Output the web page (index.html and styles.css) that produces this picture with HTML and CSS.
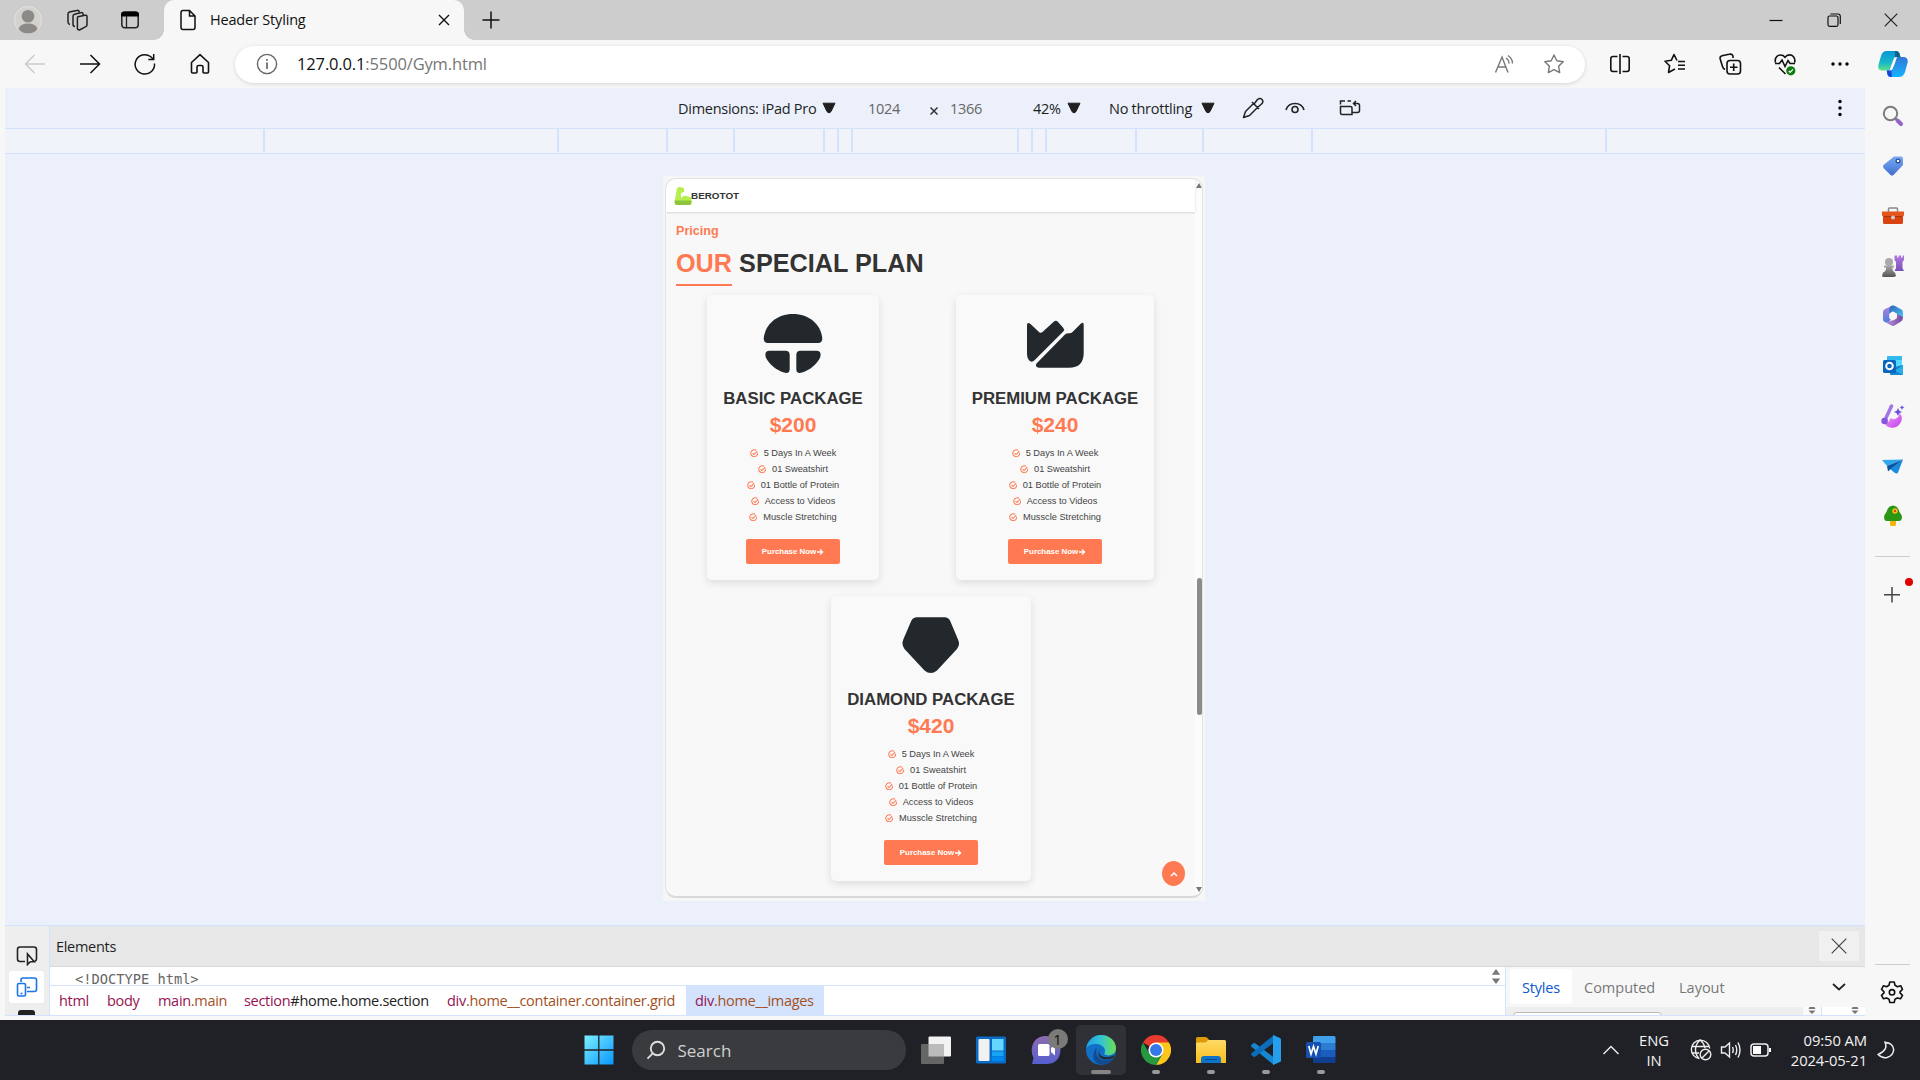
FILE: index.html
```html
<!DOCTYPE html>
<html lang="en">
<head>
<meta charset="utf-8">
<title>Header Styling</title>
<link rel="stylesheet" href="styles.css">
</head>
<body>
<svg class="defs" width="0" height="0" aria-hidden="true">
  <defs>
    <symbol id="check" viewBox="0 0 10 10"><path d="M9 4.200A4.100 4.100 0 1 1 7.200 1.500M3 4.900l1.700 1.600L8.400 2.500" fill="none" stroke="#ff7a52" stroke-width="1.200"/></symbol>
    <symbol id="arrow" viewBox="0 0 8 8"><path d="M1 4h5.400M4 1.400L6.600 4 4 6.600" fill="none" stroke="#fff" stroke-width="1.300"/></symbol>
    <symbol id="down" viewBox="0 0 14 12"><path d="M1 1.200h12L9 9.600Q7 12.200 5 9.600z" fill="#1f1f1f" stroke="#1f1f1f" stroke-linejoin="round"/></symbol>
    <linearGradient id="gwin" x1="0" y1="0" x2="1" y2="1"><stop offset="0" stop-color="#7bf0ff"/><stop offset="1" stop-color="#0a96ff"/></linearGradient>
    <linearGradient id="gpur" x1="0" y1="0" x2="0" y2="1"><stop offset="0" stop-color="#b07adf"/><stop offset="1" stop-color="#7a4fb8"/></linearGradient>
    <linearGradient id="gblue" x1="0" y1="0" x2="0" y2="1"><stop offset="0" stop-color="#78a9f3"/><stop offset="1" stop-color="#4270cf"/></linearGradient>
    <linearGradient id="ggray" x1="0" y1="0" x2="0" y2="1"><stop offset="0" stop-color="#aaa"/><stop offset="1" stop-color="#555"/></linearGradient>
    <linearGradient id="gcop" x1="0" y1="0" x2="0" y2="1"><stop offset="0" stop-color="#0796d6"/><stop offset=".6" stop-color="#18b8c8"/><stop offset="1" stop-color="#5ee08a"/></linearGradient>
    <linearGradient id="gcop2" x1="0" y1="0" x2="0" y2="1"><stop offset="0" stop-color="#3377d6"/><stop offset="1" stop-color="#14b4ff"/></linearGradient>
    <linearGradient id="gedge" x1="0" y1="0" x2="1" y2="0"><stop offset="0" stop-color="#1f9fe6"/><stop offset=".5" stop-color="#35c4d4"/><stop offset="1" stop-color="#6be04b"/></linearGradient>
    <linearGradient id="gyel" x1="0" y1="0" x2="0" y2="1"><stop offset="0" stop-color="#ffdb6a"/><stop offset="1" stop-color="#f9bc1b"/></linearGradient>
    <linearGradient id="gchat" x1="0" y1="0" x2="0" y2="1"><stop offset="0" stop-color="#8c6cae"/><stop offset="1" stop-color="#5560cf"/></linearGradient>
    <linearGradient id="gpink" x1="0" y1="0" x2="1" y2="1"><stop offset="0" stop-color="#e9a2f5"/><stop offset="1" stop-color="#c63bee"/></linearGradient>
    <linearGradient id="gm1" x1="0" y1="0" x2="0" y2="1"><stop offset="0" stop-color="#b985d8"/><stop offset="1" stop-color="#3a7be0"/></linearGradient>
    <linearGradient id="gm2" x1="0" y1="0" x2="1" y2="1"><stop offset="0" stop-color="#2c62ba"/><stop offset="1" stop-color="#4cc8f5"/></linearGradient>
    <linearGradient id="gm3" x1="0" y1="0" x2="1" y2="0"><stop offset="0" stop-color="#c190e0"/><stop offset="1" stop-color="#71479f"/></linearGradient>
  </defs>
</svg>

<header class="titlebar">
  <svg class="avatar" viewBox="0 0 28 28"><circle cx="14" cy="14" r="13.500" fill="#d3d2ce" stroke="#e4e2de"/><circle cx="14" cy="10.300" r="6.300" fill="#8c8986"/><path d="M4.500 23Q6 17.500 14 17.500T23.500 23Q20 27.500 14 27.500T4.500 23z" fill="#8c8986"/></svg>
  <svg class="workspaces" viewBox="0 0 24 24" fill="none" stroke="#222" stroke-width="1.500"><path d="M12 8.700l7-1.500q2-.4 2 1.600v8q0 1.600-1.600 2.100l-5.400 2.800q-2 .6-2.600-1V10.500q0-1.500.6-1.800z"/><path d="M17.500 7l-.8-1.900q-.7-.8-2-.3L8.500 6.200Q7 6.600 7 8v8.500q0 1.800 2 2"/><path d="M13.500 4.500l-.8-1.800q-.7-.8-2-.2L3.500 4Q2 4.600 2 6v8q0 2 2 2.500"/></svg>
  <svg class="tabmenu" viewBox="0 0 20 20"><rect x="1.800" y="2.200" width="16.400" height="15.600" rx="3" fill="none" stroke="#222" stroke-width="1.500"/><path d="M1 6.500V4.500Q1 1.500 4 1.500H16Q19 1.500 19 4.500V6.500z"/><path d="M6.500 6V18" stroke="#222" stroke-width="1.300"/></svg>
  <div class="tab">
    <svg class="doc" viewBox="0 0 18 22" fill="none" stroke="#111" stroke-width="1.500"><path d="M4 1.500H10.500L16 7V18.500Q16 20.500 14 20.500H4Q2 20.500 2 18.500V3.500Q2 1.500 4 1.500zM10.500 1.500V7H16"/></svg>
    <span class="tab-title">Header Styling</span>
    <svg class="tab-close" viewBox="0 0 12 12"><path d="M1 1l10 10M11 1L1 11" stroke="#111" stroke-width="1.400"/></svg>
  </div>
  <svg class="newtab" viewBox="0 0 18 18"><path d="M9 .5V17.500M.5 9H17.500" stroke="#111" stroke-width="1.500"/></svg>
  <div class="winctl">
    <svg viewBox="0 0 14 14"><path d="M.5 7.500h13" stroke="#111" stroke-width="1.200"/></svg>
    <svg viewBox="0 0 14 14" fill="none" stroke="#111" stroke-width="1.200"><rect x="1" y="3" width="10" height="10.300" rx="1.500"/><path d="M3.500 1H11q2.300 0 2.300 2.300V11"/></svg>
    <svg viewBox="0 0 14 14"><path d="M.7.700l12.600 12.600M13.300.700L.7 13.300" stroke="#222" stroke-width="1.200"/></svg>
  </div>
</header>

<nav class="toolbar">
  <div class="cell"><svg viewBox="0 0 24 24" fill="none" stroke="#ccc" stroke-width="1.500"><path d="M22 12H2.500M11.500 3L2.500 12l9 9"/></svg></div>
  <div class="cell"><svg viewBox="0 0 24 24" fill="none" stroke="#111" stroke-width="1.500"><path d="M2 12H21.500M12.500 3l9 9-9 9"/></svg></div>
  <div class="cell"><svg viewBox="0 0 24 24" fill="none" stroke="#111" stroke-width="1.500"><path d="M21.500 11.500A9.700 9.700 0 1 1 17.500 4.500L20.500 7.200M20.700 2V7.400H15.300"/></svg></div>
  <div class="cell"><svg viewBox="0 0 24 24" fill="none" stroke="#111" stroke-width="1.600" stroke-linejoin="round"><path d="M3.500 10.500L12 2.700l8.500 7.800V20q0 1-1 1H16q-1 0-1-1V15q0-1.500-1.500-1.500h-3Q9 13.500 9 15V20q0 1-1 1H4.500q-1 0-1-1z"/></svg></div>
  <div class="address">
    <svg class="info" viewBox="0 0 22 22" fill="none" stroke="#666" stroke-width="1.400"><circle cx="11" cy="11" r="9.600"/><path d="M11 9.500V16M11 6V7.700" stroke-width="1.700"/></svg>
    <span class="url"><b>127.0.0.1</b>:5500/Gym.html</span>
    <svg class="read" viewBox="0 0 22 22" fill="none" stroke="#777" stroke-width="1.400"><path d="M1.500 19.500L8 4l6 15.500M3.800 14h8.200M12 5q3 2 3 5.500M14 2.500q4.500 3 4.500 8"/></svg>
    <svg class="star" viewBox="0 0 22 22" fill="none" stroke="#777" stroke-width="1.400" stroke-linejoin="round"><path d="M11 2l2.800 5.800 6.400.9-4.600 4.500 1.100 6.400L11 16.600l-5.700 3 1.100-6.400L1.800 8.700l6.400-.9z"/></svg>
  </div>
  <div class="actions">
    <div class="cell"><svg viewBox="0 0 24 24" fill="none" stroke="#111" stroke-width="1.600"><path d="M12 2V22M9.500 4.500H5Q2.800 4.500 2.800 6.700V17.300Q2.800 19.500 5 19.500H9.500M14.500 4.500H19Q21.200 4.500 21.200 6.700V17.300Q21.200 19.500 19 19.500H14.500"/></svg></div>
    <div class="cell"><svg viewBox="0 0 24 24" fill="none" stroke="#111" stroke-width="1.600" stroke-linejoin="round"><path d="M14 8.500L11 2.500 8.300 8.300 2 9.200l4.600 4.500L5.500 20.500l5.500-3 1-.5M15 9.500H22M15 13.200H22M15 17H22"/></svg></div>
    <div class="cell"><svg viewBox="0 0 24 24" fill="none" stroke="#111" stroke-width="1.600"><rect x="9" y="8.500" width="13.500" height="13.500" rx="3"/><path d="M15.700 11.500V19M12 15.200H19.500M7 17.500Q5 16.500 4.500 14.500L2.200 7Q1.500 4.500 4 3.700L11 2.300Q14 1.500 15 4V6"/></svg></div>
    <div class="cell"><svg viewBox="0 0 24 24" fill="none" stroke="#111" stroke-width="1.600"><path d="M2.500 10.500Q1.500 6.500 4 4.300T10 3.500L12 5.300 14 3.500Q18 1.800 20.300 4.500T21.600 10.500M2 11.500H6.500L9 8 12 14.500 15 8.500 17 11.500H22M6 15.500L12.500 22"/><circle cx="17.800" cy="18.800" r="4.600" fill="#107c10" stroke="none"/><path d="M15.800 19l1.400 1.400 2.700-3" stroke="#fff" stroke-width="1.200"/></svg></div>
    <div class="cell"><svg viewBox="0 0 24 24"><circle cx="5" cy="12" r="1.700"/><circle cx="12" cy="12" r="1.700"/><circle cx="19" cy="12" r="1.700"/></svg></div>
  </div>
  <svg class="copilot" viewBox="0 0 30 28"><path d="M9 1H18.500Q20.700 1 21.500 3.500L22.500 7H18.500Q16 7 15 10L12.800 17Q11.800 20.500 8 20.500H4Q-.5 20.500.4 15L3 6Q4.300 1 9 1z" fill="url(#gcop)"/><path d="M17 1H18.500Q20.700 1 21.500 3.500L22.500 7H17z" fill="#12608c"/><path d="M21 27H12.500Q10.200 27 9.400 24.500L8.500 20.500Q11.800 20.500 12.800 17L15 10Q16 7 19 7H26Q30.700 7.500 29.500 13L27 22Q25.500 27 21 27z" fill="url(#gcop2)"/><path d="M9 20.500Q11.800 20.500 12.800 17L14 26.800Q10.200 27.500 9.400 24.500z" fill="#1b45d4"/><path d="M16 8.200Q17 7 19 7L17 13 14.500 19Q13 21 10 20.500 11.800 20.500 12.800 17z" fill="#fff"/></svg>
</nav>

<div class="body">
  <main class="content">
    <div class="devicebar">
      <span class="dim">Dimensions: iPad Pro</span>
      <svg class="caret"><use href="#down"/></svg>
      <span class="num">1024</span>
      <svg class="times" viewBox="0 0 10 10"><path d="M1.500 1.500l7 7M8.500 1.500l-7 7" stroke="#333" stroke-width="1.500"/></svg>
      <span class="num">1366</span>
      <span>42%</span>
      <svg class="caret"><use href="#down"/></svg>
      <span class="thr">No throttling</span>
      <svg class="caret"><use href="#down"/></svg>
      <svg class="tool" viewBox="0 0 22 22" fill="none" stroke="#222" stroke-width="1.500" stroke-linejoin="round"><path d="M11.500 6.500L3.500 14.500 1.500 20.500 7.500 18.500 15.500 10.500M10 5l7 7M12 7L15.500 2.500Q18 .5 20 2.500T19.500 7L15.500 10.500"/></svg>
      <svg class="tool" viewBox="0 0 22 22" fill="none" stroke="#222" stroke-width="1.600"><path d="M2 13Q4 6.500 11 6.500T20 13"/><circle cx="11" cy="12.500" r="3"/></svg>
      <svg class="tool" viewBox="0 0 22 22" fill="none" stroke="#222" stroke-width="1.500"><path d="M1.500 7.500V4H6M1.500 9.500H11.500Q13 9.500 13 11V17.500H3Q1.500 17.500 1.500 16zM8.500 4H12M13 15.500H18.500Q20.500 15.500 20.500 13.500V8.500Q20.500 6.500 18.500 6.500H15M17 4l-2.500 2.500L17 9"/></svg>
      <svg class="kebab" viewBox="0 0 4 18"><circle cx="2" cy="2.500" r="1.700"/><circle cx="2" cy="9" r="1.700"/><circle cx="2" cy="15.500" r="1.700"/></svg>
    </div>
    <div class="ruler"><i></i><i></i><i></i><i></i><i></i><i></i><i></i><i></i><i></i><i></i><i></i><i></i><i></i><i></i></div>
    <div class="stage">
      <div class="frame">
        <div class="screen">
          <div class="page">
            <div class="site-header">
              <svg viewBox="0 0 18 18"><path d="M3 1.500Q4-.3 7 .2L10 1.200 10.200 5 6.800 6 7 11Q10 7.500 14 9.500L17.500 10.500V16Q17 18 15 18H3Q.5 18 .7 14z" fill="#b5ee4d"/><path d="M.7 13.500H17.500V16Q17 18 15 18H3Q.3 18 .7 13.500z" fill="#8cc63c"/></svg>
              <span>BEROTOT</span>
            </div>
            <section class="pricing">
              <h4>Pricing</h4>
              <h1><span>OUR</span> SPECIAL PLAN</h1>
              <div class="cards">
                <article class="card basic">
                  <svg class="pic" viewBox="0 0 60 60" fill="#23282c"><path d="M5 30Q.5 30 .7 25C2.500 11 14 1 30 1S57.500 11 59.300 25Q59.500 30 55 30z"/><path d="M6.500 37.700H22.500Q26.700 37.700 26.700 42V56Q26.700 61 21 59.600C13 57 6 51 2.900 44.500Q1 37.700 6.500 37.700z"/><path d="M53.500 37.700H37.500Q33.300 37.700 33.300 42V56Q33.300 61 39 59.600C47 57 54 51 57.100 44.500Q59 37.700 53.500 37.700z"/></svg>
                  <h3>BASIC PACKAGE</h3><div class="price">$200</div>
                  <ul><li><svg><use href="#check"/></svg>5 Days In A Week</li><li><svg><use href="#check"/></svg>01 Sweatshirt</li><li><svg><use href="#check"/></svg>01 Bottle of Protein</li><li><svg><use href="#check"/></svg>Access to Videos</li><li><svg><use href="#check"/></svg>Muscle Stretching</li></ul>
                  <a class="buy">Purchase Now<svg><use href="#arrow"/></svg></a>
                </article>
                <article class="card premium">
                  <svg class="pic" viewBox="0 0 60 60" fill="#23282c"><path d="M2 12Q2.200 9 5.200 10.700L14.300 19.300Q16 20.500 17.500 19L28.700 8.700Q31 7 32.800 8.700L38 14.500Q40 16.500 38.300 18.500L9.500 47.300Q7.500 49.300 5.200 48.300 2 46.500 2 40z"/><path d="M56 10.500Q58.700 8.500 58.700 12V40Q58.700 54.700 44 54.700H14Q9.500 54 11.500 50.500L40 21.500Q41.500 20 44.500 20.200 46.300 20.200 47.500 19z"/></svg>
                  <h3>PREMIUM PACKAGE</h3><div class="price">$240</div>
                  <ul><li><svg><use href="#check"/></svg>5 Days In A Week</li><li><svg><use href="#check"/></svg>01 Sweatshirt</li><li><svg><use href="#check"/></svg>01 Bottle of Protein</li><li><svg><use href="#check"/></svg>Access to Videos</li><li><svg><use href="#check"/></svg>Musscle Stretching</li></ul>
                  <a class="buy">Purchase Now<svg><use href="#arrow"/></svg></a>
                </article>
                <article class="card diamond">
                  <svg class="pic" viewBox="0 0 60 60" fill="#23282c"><path d="M16 3.300H43.500Q47.500 3.300 49.200 7L57 25.500Q59.500 31 56 35L36 56.500Q29.700 61.500 23.500 56.500L3.500 35Q.2 31 2.300 25.500L10.200 7Q12 3.300 16 3.300z"/></svg>
                  <h3>DIAMOND PACKAGE</h3><div class="price">$420</div>
                  <ul><li><svg><use href="#check"/></svg>5 Days In A Week</li><li><svg><use href="#check"/></svg>01 Sweatshirt</li><li><svg><use href="#check"/></svg>01 Bottle of Protein</li><li><svg><use href="#check"/></svg>Access to Videos</li><li><svg><use href="#check"/></svg>Musscle Stretching</li></ul>
                  <a class="buy">Purchase Now<svg><use href="#arrow"/></svg></a>
                </article>
              </div>
            </section>
            <a class="to-top"><svg viewBox="0 0 8 6"><path d="M1 5l3-3 3 3" fill="none" stroke="#fff" stroke-width="1.500"/></svg></a>
          </div>
          <div class="scroll">
            <svg viewBox="0 0 6 5"><path d="M3 0l3 5H0z" fill="#777"/></svg>
            <div class="thumb"></div>
            <svg viewBox="0 0 6 5"><path d="M3 5L0 0h6z" fill="#777"/></svg>
          </div>
        </div>
      </div>
    </div>
    <div class="devtools">
      <div class="strip">
        <svg viewBox="0 0 22 22" fill="none" stroke="#222" stroke-width="1.600"><path d="M9 17.500H4Q1.500 17.500 1.500 15V5.500Q1.500 3 4 3H18Q20.500 3 20.500 5.500V15Q20.500 17 18.500 17.500"/><path d="M11.500 10V20.500L14.300 17.700H18.200z" fill="#fff"/></svg>
        <div class="on"><svg viewBox="0 0 22 22" fill="none" stroke="#1a73e8" stroke-width="1.600"><path d="M5 6V4Q5 2 7 2H18.500Q20.500 2 20.500 4V13.500Q20.500 15.500 18.500 15.500H11M11 11.500H14"/><rect x="1.500" y="7.500" width="8" height="12.500" rx="1.500"/><path d="M4.500 17.500H6.500"/></svg></div>
        <div class="cut"></div>
      </div>
      <div class="panel">
        <div class="head"><span>Elements</span><div class="x"><svg viewBox="0 0 16 16"><path d="M.7.700l14.600 14.600M15.300.700L.7 15.300" stroke="#444" stroke-width="1.200"/></svg></div></div>
        <div class="split">
          <div class="dom">
            <div class="tree"><code>&lt;!DOCTYPE html&gt;</code><svg viewBox="0 0 10 16"><path d="M5 0l4.500 6h-9zM5 16L.5 10h9z" fill="#777"/></svg></div>
            <div class="crumbs"><span class="c1"><b>html</b></span><span class="c2"><b>body</b></span><span class="c3"><b>main</b>.main</span><span class="c4"><b>section</b><em>#home.home.section</em></span><span class="c5"><b>div</b>.home__container.container.grid</span><span class="c6"><b>div</b>.home__images</span></div>
          </div>
          <div class="styles">
            <div class="tabs"><span class="sel">Styles</span><span class="t2">Computed</span><span class="t3">Layout</span><svg viewBox="0 0 14 8"><path d="M1 1l6 5.500L13 1" fill="none" stroke="#222" stroke-width="1.700"/></svg></div>
            <div class="sub"><div class="filter"></div><div class="sp"><svg viewBox="0 0 8 7"><path d="M1.500 0h5l1 2h-7zM.5 3.500h7L4 7z" fill="#777"/></svg></div><div class="sp last"><svg viewBox="0 0 8 7"><path d="M1.500 0h5l1 2h-7zM.5 3.500h7L4 7z" fill="#777"/></svg></div></div>
          </div>
        </div>
      </div>
    </div>
  </main>

  <aside class="sidebar">
    <div><svg viewBox="0 0 24 24"><circle cx="9.500" cy="9.500" r="6.700" fill="none" stroke="#7c7c7c" stroke-width="2"/><path d="M14 14l3 3" stroke="#777" stroke-width="2"/><path d="M16.500 16.500l3.500 3.500" stroke="#9264c8" stroke-width="4" stroke-linecap="round"/></svg></div>
    <div><svg viewBox="0 0 24 24"><path d="M13 2.500H20Q22 2.500 22 4.500V11L12.500 21Q11 22 9.500 21L2.500 14Q1.500 12.500 2.500 11z" fill="url(#gblue)"/><circle cx="17" cy="7" r="1.900" fill="#fff" stroke="#234b91" stroke-width="1.200"/></svg></div>
    <div><svg viewBox="0 0 24 24"><path d="M7.500 8V5Q7.500 4 8.500 4H15.500Q16.500 4 16.500 5V8" fill="none" stroke="#888" stroke-width="1.500"/><rect x="2" y="9" width="20" height="11" rx="1.500" fill="#d8430f"/><path d="M1 7.500H23V11Q23 12.500 21 12.500H3Q1 12.500 1 11z" fill="#e4561d"/><path d="M3 12.500H21" stroke="#a93308"/><circle cx="12" cy="13.500" r="2" fill="#ccc"/></svg></div>
    <div><svg viewBox="0 0 24 24"><path d="M13.500 1.500H16V3.500H17.500V1.500H20V3.500H21.500V1.500H23V6L21.500 8V14L23 17H13.500L15 14V8L13.500 6z" fill="url(#gpur)"/><circle cx="8" cy="8" r="4" fill="#aaa"/><path d="M3 11.500H13V13.500H11.500Q11 17 14 18.500L15 22Q14 23 12 23H3Q1 23 1 22L2 18.500Q5.500 17 5 13.500H3z" fill="url(#ggray)"/></svg></div>
    <div><svg viewBox="0 0 24 24"><path d="M9 2.700L13 1Q9 5 9.500 8.500V16L8 18 12 22 3 17.500Q2 17 2 15V8Q2 6 4 5z" fill="url(#gm1)"/><path d="M9 2.700Q12 .7 14 2L20.500 5.500Q22 6.500 22 8.500V14L16 10 12 7.500 8.500 9.500Q8 5 9 2.700z" fill="url(#gm2)"/><path d="M22 13Q22 16 20 17.500L13.500 21.500Q12 22.500 10 21L4.500 18Q9 18 12 16L16 13.500V10z" fill="url(#gm3)"/><path d="M12 7.500l3.800 2.200v4.500L12 16.500l-3.800-2.300V9.700z" fill="#f7f7f7"/></svg></div>
    <div><svg viewBox="0 0 24 24"><rect x="6" y="2" width="15" height="16" rx="1" fill="#32b8ed"/><path d="M13 6H21V14H13z" fill="#52dbff"/><path d="M9 14L22 11V20Q22 21 21 21H10Q9 21 9 20z" fill="#1487d1"/><path d="M22 11.500V21L14 16.500z" fill="#29aee8"/><rect x="2" y="6" width="13" height="13" rx="1.500" fill="#0667bd"/><circle cx="8.500" cy="12" r="3.300" fill="none" stroke="#fff" stroke-width="2"/></svg></div>
    <div><svg viewBox="0 0 24 24"><path d="M3.500 19Q8 19.500 9.500 14Q12 16 15 14.500Q18.500 12.500 18.500 9Q23 14 19 19.500T9 23.500Q5 22.500 3.500 19z" fill="url(#gpink)"/><path d="M10.500 2L4.500 15" stroke="#a276e8" stroke-width="3.500" stroke-linecap="round"/><circle cx="3.600" cy="17" r="3.300" fill="#8656df"/><path d="M17 4l1.300 2.700L21 8l-2.700 1.300L17 12l-1.300-2.700L13 8l2.700-1.300z" fill="#6952dc"/><path d="M21 1l.8 1.700 1.700.8-1.700.8L21 6l-.8-1.700-1.700-.8 1.700-.8z" fill="#7756df"/></svg></div>
    <div><svg viewBox="0 0 24 24"><path d="M1 6L22 5.500 6 12z" fill="#30a8ec"/><path d="M22 5.500L17 18.500Q16 20 14 19L9 15z" fill="#168dde"/><path d="M22 5.500L6 12 7 17.500 9.500 15z" fill="#0d539b"/></svg></div>
    <div><svg viewBox="0 0 24 24"><path d="M9 16H15V20.500Q15 22 13.500 22H10.500Q9 22 9 20.500z" fill="#f4b40f"/><path d="M12 1.500Q17 2 18.500 8 22 12 20.500 15.500 19.500 17.300 17 17H7Q4 17.300 3.500 15.500 2 12 5.500 8 7 2 12 1.500z" fill="#2b9615"/><circle cx="14" cy="7" r="2.700" fill="#f7c318"/><circle cx="14" cy="7" r="1.200" fill="#d6450b"/></svg></div>
    <hr>
    <div class="add"><svg viewBox="0 0 24 24"><path d="M12 4V19.500M4 11.700H20" stroke="#444" stroke-width="1.500"/></svg><i class="dot"></i></div>
    <hr class="low">
    <div class="gear"><svg viewBox="0 0 24 24" fill="none" stroke="#111" stroke-width="1.600" stroke-linejoin="round"><path d="M9.800 2H14.200L15 5.300 17.500 6.700 20.700 5.700 22.500 9.300 20 11.900V12.900L22.500 15.300 20.500 18.800 17.500 17.900 15 19.300 14.200 22.500H9.800L9 19.300 6.500 17.900 3.500 18.800 1.500 15.300 4 12.900V11.900L1.500 9.300 3.500 5.700 6.500 6.700 9 5.300z"/><circle cx="12" cy="12.300" r="2.700"/></svg></div>
  </aside>
</div>

<footer class="taskbar">
  <div class="app"><svg viewBox="0 0 30 30" fill="url(#gwin)"><path d="M.5.500H29.500V29.500H.5z"/><path d="M14.800 0V30M0 15H30" stroke="#1f2126" stroke-width="1.300"/></svg></div>
  <div class="search"><svg viewBox="0 0 20 20" fill="none" stroke="#ddd" stroke-width="1.900"><circle cx="11.500" cy="8.500" r="6.700"/><path d="M6.700 13.300L1.500 18.700"/></svg><span>Search</span></div>
  <div class="app"><svg viewBox="0 0 30 30"><rect x="7.500" y="1.500" width="22.500" height="20" rx="1" fill="#f2f2f2"/><rect x="0" y="9" width="23" height="20" rx="1" fill="#666"/><rect x="7.500" y="9" width="15.500" height="12.500" fill="#bbb"/></svg></div>
  <div class="app"><svg viewBox="0 0 30 30"><rect y="1.500" width="30" height="27" rx="1.500" fill="#0a6cc4"/><rect x="2.500" y="4" width="11" height="22" rx="1" fill="#f1f1f1"/><rect x="16" y="4" width="11.500" height="11.500" fill="#63d7ff"/><rect x="16" y="16.500" width="11.500" height="4.500" fill="#16a3f2"/><rect x="16" y="21.500" width="11.500" height="4.500" fill="#008af0"/></svg></div>
  <div class="app chat"><svg viewBox="0 0 30 30"><path d="M15 1Q29.500 2 29.500 15 28.500 29 15 29H1L2.500 23Q.5 19 .7 15 1.500 1.500 15 1z" fill="url(#gchat)"/><rect x="7" y="9" width="11.500" height="12" rx="1.500" fill="#fff"/><path d="M20 13l4-3.500V20.500L20 17z" fill="#fff"/></svg><span class="badge">1</span></div>
  <div class="app active"><svg viewBox="0 0 30 30"><circle cx="15" cy="15" r="15" fill="#1170c6"/><path d="M.2 13.500C1 6 7.500 0 15 0c9 0 15 6.500 15 13 0 5-3.500 7.300-7.500 7.300-3 0-4.700-1.300-4-2.300C20.500 14.500 17 9.500 11.500 9 6 8.600 1.500 10.500.2 13.500z" fill="url(#gedge)"/><path d="M11 12.500Q8.500 19 13.500 23.500 19 27.500 28 22.500 23 30.500 14.500 29.800 8 28 7.300 21.500 7.200 15.500 11 12.500z" fill="#124a94"/><path d="M14 13Q11 19 16.500 21.500 21 23.700 28.700 20L27.500 22.500Q20 26 15.500 23.500 10 20 14 13z" fill="#26282d"/></svg><i class="bar"></i></div>
  <div class="app"><svg viewBox="0 0 30 30"><path d="M15 15L2 7.500A15 15 0 0 1 28 7.500z" fill="#e63b2e"/><path d="M15 15V7.500H28A15 15 0 0 1 15 30L21.500 18.700z" fill="#fcc61c"/><path d="M15 15L21.500 18.800 15 30A15 15 0 0 1 2 7.500L8.500 18.800z" fill="#26983f"/><circle cx="15" cy="15" r="7.600" fill="#fff"/><circle cx="15" cy="15" r="6" fill="#3578e8"/></svg><i class="pill"></i></div>
  <div class="app"><svg viewBox="0 0 30 30"><path d="M0 3.500Q0 2 1.500 2H9.500Q11 2 12 3.500L14 6V12H0z" fill="#dc9a05"/><path d="M12 5H28.500Q30 5 30 6.500V28H0V8.500Q0 7.500 1.500 7.500H9Q10.500 7.500 12 5z" fill="url(#gyel)"/><path d="M5 28V24Q5 21 8 21H22Q25 21 25 24V28z" fill="#0e73c9"/><path d="M9 24.500H21" stroke="#064a91"/></svg><i class="pill"></i></div>
  <div class="app"><svg viewBox="0 0 30 30"><path d="M0 10.500L2 8.500Q3.300 7.600 4.500 8.500L23 22.500V30L.5 11.800Q-.2 11 0 10.500z" fill="#1687d0"/><path d="M0 19.500L2 21.500Q3.300 22.400 4.500 21.500L23 7.500V0L.5 18.200Q-.2 19 0 19.500z" fill="#0c6dbb"/><path d="M22 0L29 3Q30 3.500 30 4.500V25.500Q30 26.500 29 27L22 30z" fill="#259fec"/></svg><i class="pill"></i></div>
  <div class="app"><svg viewBox="0 0 30 30"><path d="M8 1H28Q29.500 1 29.500 2.500V8H7V2.500Q7 1 8 1z" fill="#41a0ec"/><path d="M7 8H29.500V15H7z" fill="#2b7cd3"/><path d="M7 15H29.500V22H7z" fill="#1a5dbe"/><path d="M7 22H29.500V26.500Q29.500 28 28 28H8.500Q7 28 7 26.500z" fill="#103f91"/><rect y="7" width="15" height="16" rx="1.500" fill="#1550b0"/><path d="M2.800 11l2.200 8 2.500-7.500L10 19l2.200-8" fill="none" stroke="#fff" stroke-width="1.700"/></svg><i class="pill"></i></div>
  <div class="tray">
    <svg class="up" viewBox="0 0 16 10"><path d="M.5 9L8 1.500 15.500 9" fill="none" stroke="#eee" stroke-width="1.400"/></svg>
    <div class="lang"><span>ENG</span><span>IN</span></div>
    <svg class="net" viewBox="0 0 22 22" fill="none" stroke="#eee" stroke-width="1.400"><path d="M9.500 19.500A9.200 9.200 0 1 1 19.700 9.500M1.500 7.500H19M1.500 14H9M10.200 1Q5.500 5 5.500 10.500T9 19.500M10.200 1Q14 4 15 9"/><circle cx="15.500" cy="15.500" r="5.300"/><path d="M12 19L19 12"/></svg>
    <svg class="vol" viewBox="0 0 22 20" fill="none" stroke="#eee" stroke-width="1.400"><path d="M1.500 7H5L9.500 3V17L5 13H1.500zM12.500 7Q14 10 12.500 13M15.500 5Q18 10 15.500 15M18 2.500Q22 10 18 17.500"/></svg>
    <svg class="bat" viewBox="0 0 22 14"><rect x="1" y="1" width="17" height="12" rx="3" fill="none" stroke="#eee" stroke-width="1.500"/><rect x="3" y="3" width="8" height="8" fill="#fff"/><path d="M19 5H21V9H19z" fill="#fff"/></svg>
    <div class="clock"><span>09:50 AM</span><span>2024-05-21</span></div>
    <svg class="moon" viewBox="0 0 18 18"><path d="M8 1.200Q11.500 9 1.200 13.500 5 17.500 10 16.500 16.500 14.500 16.700 8.500 16 2 8 1.200z" fill="none" stroke="#eee" stroke-width="1.500"/></svg>
  </div>
</footer>
</body>
</html>
```
FILE: styles.css
```css
* { box-sizing: border-box; }
body { margin: 0; width: 1920px; height: 1080px; overflow: hidden; display: flex; flex-direction: column; background: #f7f7f7; font: 15px "Open Sans", "Noto Sans", sans-serif; color: #1f1f1f; white-space: nowrap; }
svg { display: block; flex: none; }
.defs { position: absolute; }
h1, h3, h4, ul { margin: 0; padding: 0; }
b, em { font-weight: 400; font-style: normal; }

.titlebar { flex: none; height: 40px; display: flex; align-items: center; background: #cdcdcd; }
.avatar { width: 28px; height: 28px; margin-left: 14px; }
.workspaces { width: 24px; height: 24px; margin-left: 24px; }
.tabmenu { width: 20px; height: 20px; margin-left: 30px; }
.tab { position: relative; width: 300px; height: 40px; margin-left: 24px; display: flex; align-items: center; background: #f7f7f7; border-radius: 10px 10px 0 0; }
.tab::before, .tab::after { content: ""; position: absolute; bottom: 0; width: 10px; height: 10px; }
.tab::before { left: -10px; background: radial-gradient(circle at 0 0, transparent 9.500px, #f7f7f7 10px); }
.tab::after { right: -10px; background: radial-gradient(circle at 100% 0, transparent 9.500px, #f7f7f7 10px); }
.doc { width: 18px; height: 22px; margin-left: 15px; }
.tab-title { width: 110px; margin-left: 13px; padding-bottom: 1px; color: #111; font-size: 14.500px; letter-spacing: -.18px; }
.tab-close { width: 12px; height: 12px; margin-left: 118px; }
.newtab { width: 18px; height: 18px; margin-left: 18px; }
.winctl { margin-left: auto; margin-right: 22px; display: flex; gap: 43.500px; }
.winctl svg { width: 14px; height: 14px; }

.toolbar { flex: none; height: 48px; padding-left: 7.500px; display: flex; align-items: center; }
.cell { width: 55px; display: flex; justify-content: center; }
.cell svg { width: 24px; height: 24px; }
.address { width: 1350px; height: 37px; margin-left: 7.500px; display: flex; align-items: center; background: #fff; border-radius: 19px; box-shadow: 0 1px 4px #0002; }
.info { width: 22px; height: 22px; margin-left: 21px; }
.url { margin-left: 19px; width: 220px; padding-bottom: 2px; font-size: 16.500px; letter-spacing: -.14px; color: #767676; }
.url b { color: #111; }
.read { width: 22px; height: 22px; margin-left: 977px; }
.star { width: 22px; height: 22px; margin-left: 27px; }
.actions { display: flex; margin-left: 7px; }
.copilot { width: 30px; height: 28px; margin-left: 11px; }

.body { flex: none; height: 932px; display: flex; }
.content { width: 1860px; margin-left: 5px; display: flex; flex-direction: column; }
.devicebar { flex: none; height: 40px; padding-left: 673px; display: grid; grid-template-columns: 144px 46px 61px 21px 83px 34px 42px 92px 41px 42px 55px 483px 20px; align-items: center; background: #ebf0fa; font-size: 14.500px; letter-spacing: -.27px; }
.caret { width: 14px; height: 12px; }
.num { color: #666; }
.times { width: 10px; height: 10px; margin-top: 6px; }
.tool { width: 22px; height: 22px; }
.kebab { width: 4px; height: 18px; margin-left: 16px; }
.ruler { flex: none; height: 26px; border: solid #d3e3fd; border-width: 1px 0; padding-bottom: 1px; display: grid; grid-template-columns: 260px 294px 109px 67px 90px 14px 14px 166px 14px 14px 90px 67px 109px 294px; background: #f0f4fa; }
.ruler i { border-right: 2px solid #d3e3fd; }
.stage { flex: none; height: 771px; padding: 22px 0 0 658px; background: #ebf0fa; }
.frame { width: 542px; height: 725px; padding: 2px; background: #f6f6f6; }
.screen { height: 720px; display: flex; overflow: hidden; border: 1px solid #e2e2e2; border-bottom: 2px solid #d9d9d9; border-radius: 11px; background: #f8f8f8; }
.page { position: relative; width: 530px; font-family: "Liberation Sans", Arial, sans-serif; color: #333; }
.site-header { height: 33px; padding-left: 8px; display: flex; align-items: center; background: #fff; box-shadow: 0 1px 2px #0002; font-weight: 700; font-size: 9.900px; }
.site-header svg { width: 18px; height: 18px; margin-right: -1px; }
.pricing { padding: 11px 0 0 10px; }
h4 { height: 27px; font-size: 12.600px; line-height: 16px; color: #ff7a52; }
h1 { height: 45px; font-size: 25.200px; line-height: 26px; letter-spacing: .03px; }
h1 span { display: inline-block; height: 36px; border-bottom: 2px solid #ff7a52; color: #ff7a52; }
.cards { display: grid; grid-template-columns: 172px 198px; column-gap: 77px; row-gap: 16px; padding-left: 31px; }
.card { height: 285px; padding-top: 18px; display: flex; flex-direction: column; align-items: center; background: #f9f9f9; border-radius: 5px; box-shadow: 0 3px 8px #0000001c; }
.diamond { grid-column: 1 / 3; width: 200px; margin-left: 124px; }
.pic { width: 60px; height: 60px; }
h3 { margin-top: 16px; font-size: 16.800px; line-height: 20px; letter-spacing: 0; }
.price { margin-top: 4px; color: #ff7a52; font-size: 21px; font-weight: 700; line-height: 24px; }
ul { margin-top: 8px; list-style: none; font-size: 9.240px; }
li { height: 16px; display: flex; align-items: center; justify-content: center; gap: 5.500px; color: #444; }
li svg { width: 8.500px; height: 8.500px; }
.buy { width: 94px; height: 25px; margin-top: 14px; display: flex; align-items: center; justify-content: center; background: #ff7a52; border-radius: 2px; color: #fff; font-weight: 700; font-size: 7.900px; }
.buy svg { width: 8px; height: 8px; }
.to-top { position: absolute; right: 10px; bottom: 10px; width: 23px; height: 25px; display: flex; align-items: center; justify-content: center; border-radius: 50%; background: #ff7a52; }
.to-top svg { width: 8px; height: 6px; }
.scroll { flex: 1; display: flex; flex-direction: column; align-items: center; padding: 4px 0 4px 1px; background: #fcfcfc; }
.scroll svg { width: 6px; height: 5px; }
.thumb { width: 5px; height: 137px; margin: 390px 0 auto; border-radius: 3px; background: #8b8b8b; }

.devtools { flex: none; height: 91px; display: flex; border: solid #d3e3fd; border-width: 1px 0; background: #eee; }
.strip { width: 45px; padding-left: 4px; border-right: 1px solid #d3e3fd; overflow: hidden; }
.strip > svg { width: 22px; height: 22px; margin: 18px 0 0 7px; }
.on { width: 35px; height: 32px; margin-top: 5px; padding: 5px 6px 6px 7px; background: #fff; border-radius: 3px; }
.on svg { width: 22px; height: 22px; }
.cut { width: 17px; height: 12px; margin: 7px 0 0 9px; border-radius: 3px; background: #222; }
.panel { width: 1815px; }
.head { height: 41px; padding: 0 6px; display: flex; align-items: center; justify-content: space-between; background: #e7e7e7; border-bottom: 1px solid #d8d8d8; font-size: 14.500px; letter-spacing: -.3px; }
.x { width: 40px; height: 30px; padding: 7px 12px; background: #f0f0f0; }
.x svg { width: 16px; height: 16px; }
.split { height: 48px; display: flex; }
.dom { width: 1455px; background: #fff; }
.tree { height: 19px; padding: 3px 4px 0 25px; display: flex; justify-content: space-between; border-bottom: 1px solid #d3e3fd; overflow: hidden; }
.tree svg { width: 10px; height: 15px; margin-top: -1px; }
code { margin-top: 1px; font: 13.700px/16px "DejaVu Sans Mono", monospace; color: #666; }
.crumbs { height: 29px; display: flex; line-height: 29px; font-size: 14.500px; letter-spacing: -.3px; color: #a3501e; }
.crumbs span { padding-left: 9px; }
.crumbs b { color: #961352; }
.crumbs em { color: #222; }
.c1 { width: 48px; } .c2 { width: 51px; } .c3 { width: 86px; } .c4 { width: 203px; } .c5 { width: 248px; } .c6 { width: 138px; background: #d3e3fd; }
.styles { width: 360px; border-left: 1px solid #d3e3fd; }
.tabs { height: 40px; padding-left: 4px; display: flex; align-items: center; background: #f7f7f7; color: #777; font-size: 14.500px; }
.sel { width: 62px; height: 35px; margin-top: -1px; text-align: center; line-height: 37px; background: #fff; border-radius: 3px; color: #0b57d0; letter-spacing: -.2px; }
.t2 { width: 82px; margin-left: 12px; }
.t3 { width: 60px; margin-left: 13px; }
.tabs svg { width: 14px; height: 8px; margin-left: 93px; }
.sub { height: 8px; display: flex; overflow: hidden; background: #eee; }
.filter { width: 149px; height: 20px; margin: 5px 141px 0 7px; border: 1px solid #bbb; border-radius: 4px; background: #fff; }
.sp { width: 19px; padding-left: 5px; background: #fafafa; border-right: 1px solid #d3e3fd; }
.sp svg { width: 8px; height: 7px; }
.last { width: 43px; padding-left: 29px; border: 0; background: #fff; }

.sidebar { width: 55px; padding-top: 3px; display: flex; flex-direction: column; align-items: center; }
.sidebar > div { flex: none; width: 50px; height: 50px; padding: 13px; }
.sidebar svg { width: 24px; height: 24px; }
.sidebar hr { flex: none; width: 35px; height: 1px; margin: 0; border: 0; background: #ccc; }
.sidebar hr:not(.low) { margin-top: 15px; }
.sidebar .add { position: relative; margin-top: 13px; }
.sidebar .add svg, .sidebar .gear svg { margin-left: -1px; }
.dot { position: absolute; left: 37px; top: 8px; width: 8px; height: 8px; border-radius: 50%; background: #e00000; }
.sidebar .low { margin-top: 344px; }
.sidebar .gear { margin-top: 2px; }

.taskbar { flex: none; height: 60px; padding-left: 571.500px; display: flex; align-items: center; background: #202126; color: #f2f2f2; }
.app { position: relative; width: 55px; height: 50px; display: flex; align-items: center; justify-content: center; }
.app svg { width: 30px; height: 30px; }
.search { width: 274px; height: 40px; margin: 0 3px 0 5px; padding-left: 14px; display: flex; align-items: center; gap: 12px; border-radius: 20px; background: #3a3b3f; font-size: 17px; color: #d0d0d0; }
.search svg { width: 20px; height: 20px; }
.active { width: 50px; margin: 0 2.500px; border-radius: 5px; background: #303136; }
.bar, .pill { position: absolute; bottom: 1px; width: 20px; height: 4px; border-radius: 2px; background: #858585; }
.pill { width: 8px; background: #999; }
.badge { position: absolute; left: 29px; top: 4px; width: 20px; height: 20px; border-radius: 50%; background: #7c7a78; color: #111; text-align: center; line-height: 20px; font-size: 15px; }
.tray { flex: 1; display: flex; align-items: center; }
.up { width: 16px; height: 10px; margin-left: 254.500px; }
.lang { width: 40px; margin-left: 15px; text-align: center; }
.lang span, .clock span { display: block; line-height: 20px; font-size: 14.800px; letter-spacing: -.1px; }
.net { width: 22px; height: 22px; margin-left: 16px; }
.vol { width: 22px; height: 20px; margin-left: 8px; }
.bat { width: 22px; height: 14px; margin-left: 8px; }
.clock { width: 90px; margin-left: 5px; text-align: right; }
.moon { width: 18px; height: 18px; margin-left: 10px; }
```
